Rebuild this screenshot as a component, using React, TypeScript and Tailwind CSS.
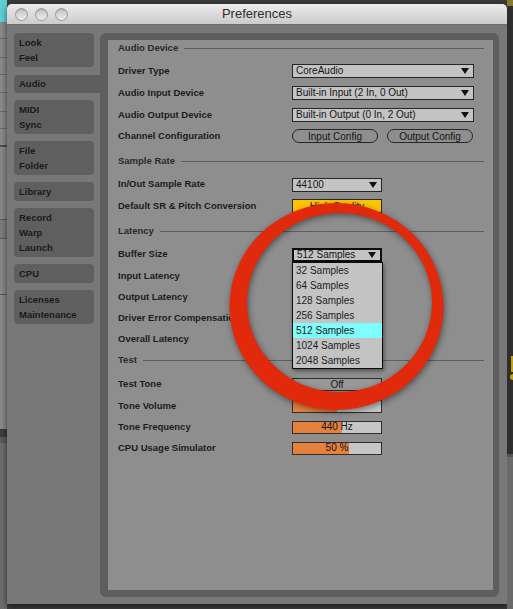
import React from 'react';

const tabs: { lines: string[]; active?: boolean }[] = [
  { lines: ['Look', 'Feel'] },
  { lines: ['Audio'], active: true },
  { lines: ['MIDI', 'Sync'] },
  { lines: ['File', 'Folder'] },
  { lines: ['Library'] },
  { lines: ['Record', 'Warp', 'Launch'] },
  { lines: ['CPU'] },
  { lines: ['Licenses', 'Maintenance'] },
];

const bufferSizes = ['32 Samples', '64 Samples', '128 Samples', '256 Samples', '512 Samples', '1024 Samples', '2048 Samples'];

function Arrow() {
  return (
    <svg width="8" height="6" viewBox="0 0 8 6" className="shrink-0">
      <polygon points="0,0 8,0 4,6" fill="#111" />
    </svg>
  );
}

function Section({ title, className }: { title: string; className?: string }) {
  return (
    <div className={`h-[16px] flex items-center text-[9.5px] font-bold text-[#2a2a2a] ${className || ''}`}>
      <span>{title}</span>
      <div className="flex-1 h-px bg-[#5f5f5f] ml-[6px]" />
    </div>
  );
}

function Row({ label, children, className }: { label: string; children?: React.ReactNode; className?: string }) {
  return (
    <div className={`flex items-center pt-px ${className || 'h-[21px]'}`}>
      <div className="w-[174px] shrink-0 text-[9.5px] font-bold text-[#1c1c1c] whitespace-nowrap">{label}</div>
      {children}
    </div>
  );
}

function Dropdown({ value, wide, open }: { value: string; wide?: boolean; open?: boolean }) {
  return (
    <div
      className={`h-[14px] flex items-center justify-between bg-[#c3c3c3] text-[10px] text-[#151515] pl-[3px] pr-[4px] ${
        wide ? 'w-[182px]' : 'w-[90px]'
      } ${open ? 'border-2 border-[#0d0d0d]' : 'border border-[#262626]'}`}
    >
      <span className="leading-none">{value}</span>
      <Arrow />
    </div>
  );
}

function Bar({ fill, text }: { fill: number; text?: string }) {
  return (
    <div className="relative w-[90px] h-[13px] border border-[#2e2e2e] bg-[#c6c6c6] flex items-center justify-center text-[10px] text-[#151515]">
      <div className="absolute left-0 top-0 bottom-0 bg-[#e4813d]" style={{ width: fill }} />
      {text && <span className="relative leading-none">{text}</span>}
    </div>
  );
}

export default function App() {
  return (
    <div className="relative w-[513px] h-[609px] overflow-hidden flex bg-[#3b3b3b] font-['Liberation_Sans',Arial,sans-serif]">
      {/* desktop behind, left */}
      <div className="w-[7px] shrink-0 flex flex-col">
        <div className="h-[22px] bg-[#5fd0d0]" />
        <div className="h-[17px] bg-[#8a8a8a] border-b border-[#6a6a6a]" />
        <div className="h-[19px] bg-[#8a8a8a] border-b border-[#6a6a6a]" />
        <div className="h-[17px] bg-[#8a8a8a] border-b border-[#6a6a6a]" />
        <div className="h-[18px] bg-[#8a8a8a] border-b border-[#6a6a6a]" />
        <div className="h-[19px] bg-[#8a8a8a] border-b border-[#6a6a6a]" />
        <div className="h-[17px] bg-[#8a8a8a] border-b border-[#6a6a6a]" />
        <div className="h-[18px] bg-[#8a8a8a] border-b-2 border-[#4e4e4e]" />
        <div className="h-[72px] bg-[#888]" />
        <div className="h-[20px] bg-[#7c7c7c] border-y border-[#5a5a5a]" />
        <div className="h-[56px] bg-[#888] border-b border-[#555]" />
        <div className="h-[134px] bg-[#8a8a8a]" />
        <div className="h-[8px] bg-[#3c3c3c]" />
        <div className="h-[6px] bg-[#5a5a5a]" />
        <div className="flex-1 bg-[#6c6c6c]" />
      </div>

      {/* window */}
      <div className="mt-[4px] w-[500px] h-[600px] shrink-0 flex flex-col rounded-t-[5px] bg-[#787878] shadow-[0_2px_6px_rgba(0,0,0,0.6)]">
        <div className="h-[21px] shrink-0 relative flex items-center justify-center rounded-t-[5px] bg-gradient-to-b from-[#ececec] to-[#cbcbcb] border-b border-[#6e6e6e]">
          <div className="absolute left-[8px] top-[4px] flex gap-[7px]">
            {[0, 1, 2].map((i) => (
              <div
                key={i}
                className="w-[13px] h-[13px] rounded-full border border-[#9c9c9c] bg-gradient-to-b from-[#c4c4c4] to-[#ececec] shadow-[inset_0_1px_1px_rgba(0,0,0,0.15)]"
              />
            ))}
          </div>
          <span className="text-[13px] text-[#2d2d2d]">Preferences</span>
        </div>

        <div className="flex-1 flex pt-[8px] pl-[7px] pr-[8px] pb-[7px]">
          {/* tabs */}
          <div className="w-[86px] shrink-0 flex flex-col gap-[7px]">
            {tabs.map((t) =>
              t.active ? (
                <div
                  key={t.lines[0]}
                  className="mt-px h-[18px] w-[86px] bg-[#5e5e5e] rounded-l-[4px] pl-[5px] flex items-center text-[9.5px] font-bold text-[#1a1a1a]"
                >
                  {t.lines[0]}
                </div>
              ) : (
                <div
                  key={t.lines[0]}
                  className="w-[80px] bg-[#5f5f5f] rounded-[4px] pl-[5px] py-[2px] text-[9.5px] leading-[15px] font-bold text-[#1a1a1a]"
                >
                  {t.lines.map((l) => (
                    <div key={l}>{l}</div>
                  ))}
                </div>
              )
            )}
          </div>

          {/* panel */}
          <div className="flex-1 bg-[#5e5e5e] rounded-[6px] pt-[7px] pb-[7px] pl-[8px] pr-[6px]">
            <div className="h-full bg-[#8e8e8e] pl-[10px] pr-[9px]">
              <Section title="Audio Device" />
              <Row label="Driver Type" className="h-[21px] mt-[4px]">
                <Dropdown value="CoreAudio" wide />
              </Row>
              <Row label="Audio Input Device" className="h-[23px]">
                <Dropdown value="Built-in Input (2 In, 0 Out)" wide />
              </Row>
              <Row label="Audio Output Device">
                <Dropdown value="Built-in Output (0 In, 2 Out)" wide />
              </Row>
              <Row label="Channel Configuration">
                <div className="flex gap-[9px]">
                  <div className="w-[86px] h-[14px] rounded-full border border-[#262626] flex items-center justify-center text-[10px] text-[#151515]">
                    Input Config
                  </div>
                  <div className="w-[86px] h-[14px] rounded-full border border-[#262626] flex items-center justify-center text-[10px] text-[#151515]">
                    Output Config
                  </div>
                </div>
              </Row>

              <Section title="Sample Rate" className="mt-[7px]" />
              <Row label="In/Out Sample Rate" className="h-[22px] mt-[4px]">
                <Dropdown value="44100" />
              </Row>
              <Row label="Default SR & Pitch Conversion">
                <div className="w-[90px] h-[14px] border border-[#262626] bg-[#ffc400] flex items-center justify-center text-[10px] text-[#151515]">
                  High Quality
                </div>
              </Row>

              <Section title="Latency" className="mt-[7px]" />
              <Row label="Buffer Size" className="h-[22px] mt-[4px]">
                <div className="relative z-10">
                  <Dropdown value="512 Samples" open />
                  <div className="absolute left-0 top-full w-[91px] bg-[#c3c3c3] border-[1.5px] border-[#0d0d0d] shadow-[1px_2px_4px_rgba(0,0,0,0.45)]">
                    {bufferSizes.map((s) => (
                      <div
                        key={s}
                        className={`h-[15px] pl-[3px] flex items-center text-[10px] text-[#1c1c1c] ${
                          s === '512 Samples' ? 'bg-[#7ffdfd]' : ''
                        }`}
                      >
                        {s}
                      </div>
                    ))}
                  </div>
                </div>
              </Row>
              <Row label="Input Latency" />
              <Row label="Output Latency" />
              <Row label="Driver Error Compensation" />
              <Row label="Overall Latency" />

              <Section title="Test" className="mt-[3px]" />
              <Row label="Test Tone" className="h-[22px] mt-[5px]">
                <div className="w-[90px] h-[13px] border border-[#2e2e2e] bg-[#989898] flex items-center justify-center text-[10px] text-[#151515]">
                  Off
                </div>
              </Row>
              <Row label="Tone Volume">
                <Bar fill={44} />
              </Row>
              <Row label="Tone Frequency">
                <Bar fill={49} text="440 Hz" />
              </Row>
              <Row label="CPU Usage Simulator">
                <Bar fill={56} text="50 %" />
              </Row>
            </div>
          </div>
        </div>
      </div>

      {/* desktop behind, right */}
      <div className="w-[6px] shrink-0 flex flex-col">
        <div className="h-[6px] bg-[#8a7a2a]" />
        <div className="h-[350px] bg-[#2e2e2e]" />
        <div className="h-[16px] bg-[#2e2e2e] flex justify-end">
          <div className="w-[2px] bg-[#c9a100]" />
        </div>
        <div className="h-[10px] bg-[#2e2e2e] flex justify-end items-center">
          <div className="w-[3px] h-[6px] rounded-l-full bg-[#c9a100]" />
        </div>
        <div className="h-[72px] bg-[#2e2e2e]" />
        <div className="h-[3px] bg-[#555]" />
        <div className="flex-1 bg-[#6a6a6a]" />
      </div>

      {/* red annotation ring */}
      <svg
        className="absolute left-0 top-0 pointer-events-none drop-shadow-[1px_2px_3px_rgba(0,0,0,0.45)]"
        width="513"
        height="609"
        viewBox="0 0 513 609"
      >
        <path
          fillRule="evenodd"
          fill="#e1290c"
          d="M229.5 306.5 A107 103.5 0 1 0 443.5 306.5 A107 103.5 0 1 0 229.5 306.5 Z M247 302.5 A92.5 89.5 0 1 1 432 302.5 A92.5 89.5 0 1 1 247 302.5 Z"
        />
      </svg>
    </div>
  );
}
